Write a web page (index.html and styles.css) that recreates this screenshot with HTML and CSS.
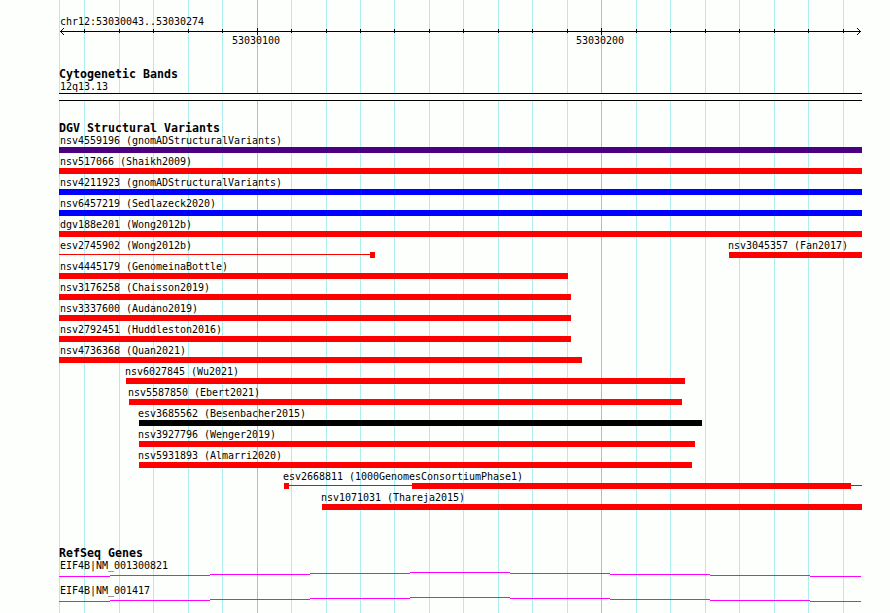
FILE: index.html
```
<!DOCTYPE html>
<html>
<head>
	<title>chr12:53030043..53030274</title>
	<meta charset='UTF-8'>
	<link rel="stylesheet" href="styles.css">
</head>
<body>
	<div class='browser'>
		<svg class='gridLines' width='890' height='613' shape-rendering='crispEdges'>
			<path class='minor' d='M59.5 0V613M84.5 0V613M119.5 0V613M153.5 0V613M188.5 0V613M222.5 0V613M291.5 0V613M326.5 0V613M360.5 0V613M394.5 0V613M429.5 0V613M463.5 0V613M498.5 0V613M532.5 0V613M567.5 0V613M636.5 0V613M670.5 0V613M705.5 0V613M739.5 0V613M774.5 0V613M808.5 0V613M843.5 0V613'/>
			<path class='major' d='M257.5 0V613M601.5 0V613'/>
		</svg>
		<div class='tracks'>
			<div class='ruler'>
				<div class='label'>chr12:53030043..53030274</div>
				<!-- scale: ticks every 10 bp, long ones every 100 bp -->
				<svg class='axis' width='803' height='8' shape-rendering='crispEdges'>
					<path d='M1 4.5H802M25.5 2V6M60.5 2V6M94.5 2V6M129.5 2V6M163.5 2V6M198.5 1V8M232.5 2V6M267.5 2V6M301.5 2V6M335.5 2V6M370.5 2V6M404.5 2V6M439.5 2V6M473.5 2V6M508.5 2V6M542.5 1V8M577.5 2V6M611.5 2V6M646.5 2V6M680.5 2V6M715.5 2V6M749.5 2V6M784.5 2V6'/>
					<path d='M2 3.5H3M3 2.5H4M4 1.5H5M2 5.5H3M3 6.5H4M4 7.5H5M800 3.5H801M799 2.5H800M798 1.5H799M800 5.5H801M799 6.5H800M798 7.5H799'/>
				</svg>
				<div class='scale'>
					<span>53030100</span>
					<span>53030200</span>
				</div>
			</div>

			<div class='track bands'>
				<div class='title'>Cytogenetic Bands</div>
				<div class='label'>12q13.13</div>
				<div class='band'></div>
			</div>

			<div class='track variants'>
				<div class='title'>DGV Structural Variants</div>
				<div class='row'><div class='feature'><div class='label'>nsv4559196 (gnomADStructuralVariants)</div><div class='bar indigo' style='width:803px'></div></div></div>
				<div class='row'><div class='feature'><div class='label'>nsv517066 (Shaikh2009)</div><div class='bar red' style='width:803px'></div></div></div>
				<div class='row'><div class='feature'><div class='label'>nsv4211923 (gnomADStructuralVariants)</div><div class='bar blue' style='width:803px'></div></div></div>
				<div class='row'><div class='feature'><div class='label'>nsv6457219 (Sedlazeck2020)</div><div class='bar blue' style='width:803px'></div></div></div>
				<div class='row'><div class='feature'><div class='label'>dgv188e201 (Wong2012b)</div><div class='bar red' style='width:803px'></div></div></div>
				<div class='row'>
					<div class='feature'>
						<div class='label'>esv2745902 (Wong2012b)</div>
						<div class='parts'><div class='line' style='width:311px'></div><div class='bar red' style='width:5px'></div></div>
					</div>
					<div class='feature inner' style='margin-left:354px'><div class='label'>nsv3045357 (Fan2017)</div><div class='bar red' style='width:133px'></div></div>
				</div>
				<div class='row'><div class='feature'><div class='label'>nsv4445179 (GenomeinaBottle)</div><div class='bar red' style='width:509px'></div></div></div>
				<div class='row'><div class='feature'><div class='label'>nsv3176258 (Chaisson2019)</div><div class='bar red' style='width:512px'></div></div></div>
				<div class='row'><div class='feature'><div class='label'>nsv3337600 (Audano2019)</div><div class='bar red' style='width:512px'></div></div></div>
				<div class='row'><div class='feature'><div class='label'>nsv2792451 (Huddleston2016)</div><div class='bar red' style='width:512px'></div></div></div>
				<div class='row'><div class='feature'><div class='label'>nsv4736368 (Quan2021)</div><div class='bar red' style='width:523px'></div></div></div>
				<div class='row'><div class='feature inner' style='margin-left:67px'><div class='label'>nsv6027845 (Wu2021)</div><div class='bar red' style='width:559px'></div></div></div>
				<div class='row'><div class='feature inner' style='margin-left:70px'><div class='label'>nsv5587850 (Ebert2021)</div><div class='bar red' style='width:553px'></div></div></div>
				<div class='row'><div class='feature inner' style='margin-left:80px'><div class='label'>esv3685562 (Besenbacher2015)</div><div class='bar black' style='width:563px'></div></div></div>
				<div class='row'><div class='feature inner' style='margin-left:80px'><div class='label'>nsv3927796 (Wenger2019)</div><div class='bar red' style='width:556px'></div></div></div>
				<div class='row'><div class='feature inner' style='margin-left:80px'><div class='label'>nsv5931893 (Almarri2020)</div><div class='bar red' style='width:553px'></div></div></div>
				<div class='row'>
					<div class='feature inner' style='margin-left:225px'>
						<div class='label'>esv2668811 (1000GenomesConsortiumPhase1)</div>
						<div class='parts'><div class='bar red' style='width:5px'></div><div class='line' style='width:123px'></div><div class='bar red' style='width:439px'></div><div class='line' style='width:11px'></div></div>
					</div>
				</div>
				<div class='row'><div class='feature inner' style='margin-left:263px'><div class='label'>nsv1071031 (Thareja2015)</div><div class='bar red' style='width:540px'></div></div></div>
			</div>

			<div class='track genes'>
				<div class='title'>RefSeq Genes</div>
				<div class='gene'>
					<div class='label'>EIF4B|NM_001300821</div>
					<svg width='803' height='5' shape-rendering='crispEdges'>
						<path d='M0 4.5H51M51 3.5H151M151 2.5H251M251 1.5H351M351 0.5H451M451 1.5H551M551 2.5H651M651 3.5H751M751 4.5H802'/>
					</svg>
				</div>
				<div class='gene'>
					<div class='label'>EIF4B|NM_001417</div>
					<svg width='803' height='5' shape-rendering='crispEdges'>
						<path d='M0 4.5H51M51 3.5H151M151 2.5H251M251 1.5H351M351 0.5H451M451 1.5H551M551 2.5H651M651 3.5H751M751 4.5H802'/>
					</svg>
				</div>
			</div>
		</div>
	</div>
</body>
</html>
```

FILE: styles.css
```
body {
	margin: 0;
	background-color: #fdfffc;
	color: #000;
	font-family: "DejaVu Sans Mono", "Liberation Mono", monospace;
	font-size: 10px;
	overflow: hidden;
}
svg {
	display: block;
	fill: none;
}
/* grid lines and tracks share one cell */
.browser {
	display: grid;
	width: 890px;
	height: 613px;
	overflow: hidden;
}
.gridLines, .tracks {
	grid-area: 1 / 1;
}
.minor { stroke: #afeeee; }
.major { stroke: #87ceeb; }
.tracks {
	width: 803px;
	padding: 15px 0 0 59px;
}
.label {
	height: 12px;
	line-height: 14px;
	padding-left: 1px;
	letter-spacing: -0.02px;
	white-space: nowrap;
}
.inner .label {
	padding-left: 0;
	margin-left: -1px;
}
.title {
	height: 12px;
	line-height: 12px;
	font-size: 11.6px;
	font-weight: bold;
	letter-spacing: 0.015px;
	white-space: nowrap;
}
.axis {
	stroke: #000;
}
.scale {
	display: flex;
	gap: 296px;
	height: 12px;
	line-height: 12px;
	padding-left: 173px;
	letter-spacing: -0.02px;
}
.bands {
	padding-top: 21px;
}
.band {
	height: 6px;
	margin-top: 1px;
	border-top: 1px solid #000;
	border-bottom: 1px solid #000;
	background-color: #fdfffc;
}
.variants {
	padding-top: 21px;
}
.row {
	display: flex;
	height: 21px;
}
.feature .label {
	margin-bottom: 1px;
}
.bar {
	height: 6px;
}
.parts {
	display: flex;
}
.line {
	height: 1px;
	margin-top: 2px;
	background-color: #ff0000;
}
.red { background-color: #ff0000; }
.blue { background-color: #0000ff; }
.indigo { background-color: #4b0082; }
.black { background-color: #000; }
.genes {
	padding-top: 35px;
}
.gene {
	height: 25px;
}
.gene svg {
	margin-top: 1px;
	stroke: #ff00ff;
}
```
